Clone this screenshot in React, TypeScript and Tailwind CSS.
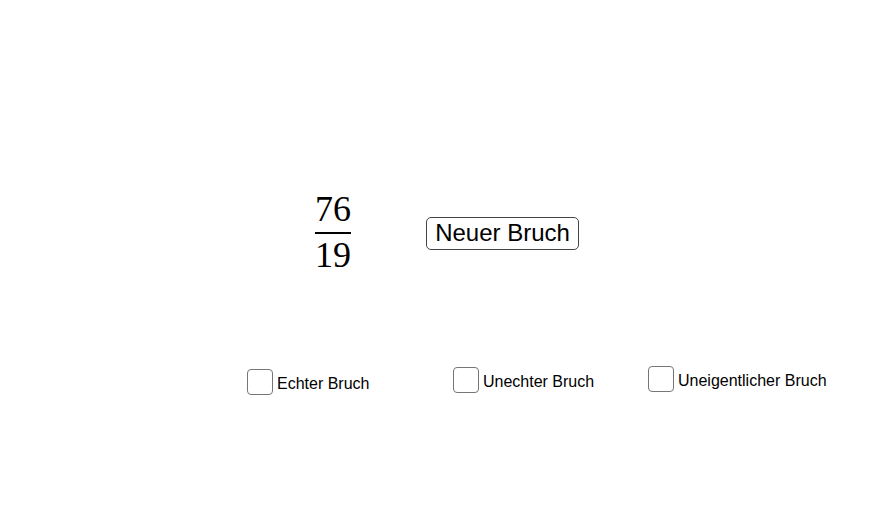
export default function App() {
  const boxes = [
    { left: 247, top: 369, label: 'Echter Bruch' },
    { left: 453, top: 367, label: 'Unechter Bruch' },
    { left: 648, top: 366, label: 'Uneigentlicher Bruch' },
  ]

  return (
    <div className="relative w-[891px] h-[518px] bg-white overflow-hidden" style={{ fontFamily: '"Liberation Sans", Arial, sans-serif' }}>
      {/* fraction */}
      <div
        className="absolute left-[313px] top-[191px] flex flex-col items-center text-black text-[36px] leading-none"
        style={{ fontFamily: '"Liberation Serif", "Times New Roman", serif' }}
      >
        <span className="px-[2px]">76</span>
        <div className="w-[36px] h-[1.5px] bg-black mt-[5px] mb-[3px]" />
        <span className="px-[2px]">19</span>
      </div>

      {/* button */}
      <button className="absolute left-[426px] top-[217px] w-[153px] h-[33px] border border-[#444] rounded-[5px] bg-white text-black text-[24px] leading-none flex items-center justify-center pb-[2px]">
        Neuer Bruch
      </button>

      {/* checkboxes */}
      {boxes.map(b => (
        <label key={b.label} className="absolute flex items-center gap-[4px]" style={{ left: b.left, top: b.top }}>
          <span className="w-[26px] h-[26px] border-[1.5px] border-[#767676] rounded-[4px] bg-white" />
          <span className="text-[16px] text-black leading-none pt-[3px]">{b.label}</span>
        </label>
      ))}
    </div>
  )
}
